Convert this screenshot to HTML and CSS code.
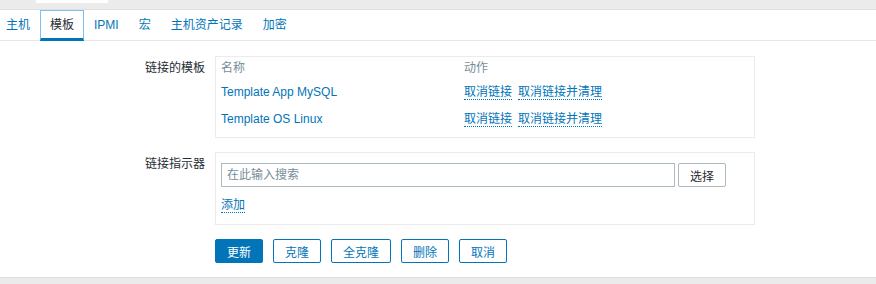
FILE: index.html
```html
<!DOCTYPE html>
<html lang="zh-CN">
<head>
    <meta charset="UTF-8">
    <title>模板</title>
    <link rel="stylesheet" href="styles.css">
</head>
<body>
    <div class="top-band"><div class="top-tab-tail"></div></div>
    <ul class="tabs">
        <li>主机</li>
        <li class="active">模板</li>
        <li>IPMI</li>
        <li>宏</li>
        <li>主机资产记录</li>
        <li>加密</li>
    </ul>

    <div class="form">
        <div class="form-label">链接的模板</div>
        <div class="form-box box-templates">
            <table class="linked">
                <tr class="head">
                    <th class="col-name">名称</th>
                    <th>动作</th>
                </tr>
                <tr>
                    <td><a href="#">Template App MySQL</a></td>
                    <td><a class="dotted" href="#">取消链接</a><a class="dotted" href="#">取消链接并清理</a></td>
                </tr>
                <tr>
                    <td><a href="#">Template OS Linux</a></td>
                    <td><a class="dotted" href="#">取消链接</a><a class="dotted" href="#">取消链接并清理</a></td>
                </tr>
            </table>
        </div>

        <div class="form-label">链接指示器</div>
        <div class="form-box box-link">
            <div class="search-row">
                <input type="text" class="search" placeholder="在此输入搜索">
                <button class="btn-grey">选择</button>
            </div>
            <a class="dotted add" href="#">添加</a>
        </div>

        <div></div>
        <div class="actions">
            <button class="btn main">更新</button>
            <button class="btn">克隆</button>
            <button class="btn">全克隆</button>
            <button class="btn">删除</button>
            <button class="btn">取消</button>
        </div>
    </div>

    <div class="bottom-band"></div>
</body>
</html>
```

FILE: styles.css
```css
body {
    margin: 0;
    background: #fff;
    color: #1f2c33;
    font-family: "Liberation Sans", Arial, "Noto Sans CJK SC", sans-serif;
    font-size: 12px;
}
.top-band {
    height: 9px;
    background: #ebebeb;
    border-bottom: 1px solid #dedede;
    display: flex;
}
.top-tab-tail {
    margin-left: 36px;
    width: 72px;
    height: 3px;
    background: #fff;
}
.tabs {
    list-style: none;
    margin: 0;
    padding: 0;
    display: flex;
    height: 30px;
    border-bottom: 1px solid #e6e6e6;
}
.tabs li {
    padding: 0 10px;
    line-height: 30px;
    color: #0275b8;
    white-space: nowrap;
}
.tabs li:first-child {
    padding-left: 6px;
}
.tabs li.active {
    color: #1f2c33;
    padding: 0 9px;
    line-height: 28px;
    border: 1px solid #80c0f0;
    border-bottom: 3px solid #0275b8;
    margin-bottom: -1px;
}
.form {
    display: grid;
    grid-template-columns: 205px 540px;
    column-gap: 10px;
    row-gap: 14px;
    padding-top: 15px;
}
.form-label {
    text-align: right;
    padding-top: 4px;
    line-height: 16px;
}
.form-box {
    border: 1px solid #ebebeb;
    padding: 3px 5px 5px 5px;
}
a {
    color: #0275b8;
    text-decoration: none;
}
a.dotted {
    border-bottom: 1px dotted #0275b8;
    margin-right: 6px;
}
.linked {
    border-collapse: collapse;
}
.linked th {
    text-align: left;
    font-weight: normal;
    color: #768d99;
    height: 18px;
    line-height: 16px;
    padding: 0;
    vertical-align: top;
}
.linked .col-name {
    width: 243px;
}
.linked td {
    height: 27px;
    padding: 0;
    line-height: 16px;
}
.box-link {
    padding: 10px 5px 11px 5px;
}
.search-row {
    display: flex;
    gap: 3px;
    margin-bottom: 10px;
}
.search {
    width: 454px;
    height: 24px;
    box-sizing: border-box;
    border: 1px solid #acbbc0;
    padding: 0 5px;
    font: inherit;
    color: #1f2c33;
}
.search::placeholder {
    color: #768d99;
}
.btn-grey {
    width: 48px;
    height: 24px;
    border: 1px solid #acbbc0;
    border-radius: 2px;
    background: #fff;
    font: inherit;
    color: #1f2c33;
}
.add {
    line-height: 16px;
}
.actions {
    display: flex;
    gap: 10px;
}
.btn {
    height: 24px;
    padding: 0 11px;
    border: 1px solid #0275b8;
    border-radius: 2px;
    background: #fff;
    color: #0275b8;
    font: inherit;
}
.btn.main {
    background: #0275b8;
    color: #fff;
}
.bottom-band {
    margin-top: 14px;
    height: 8px;
    background: #ebebeb;
    border-top: 1px solid #dedede;
}
```
